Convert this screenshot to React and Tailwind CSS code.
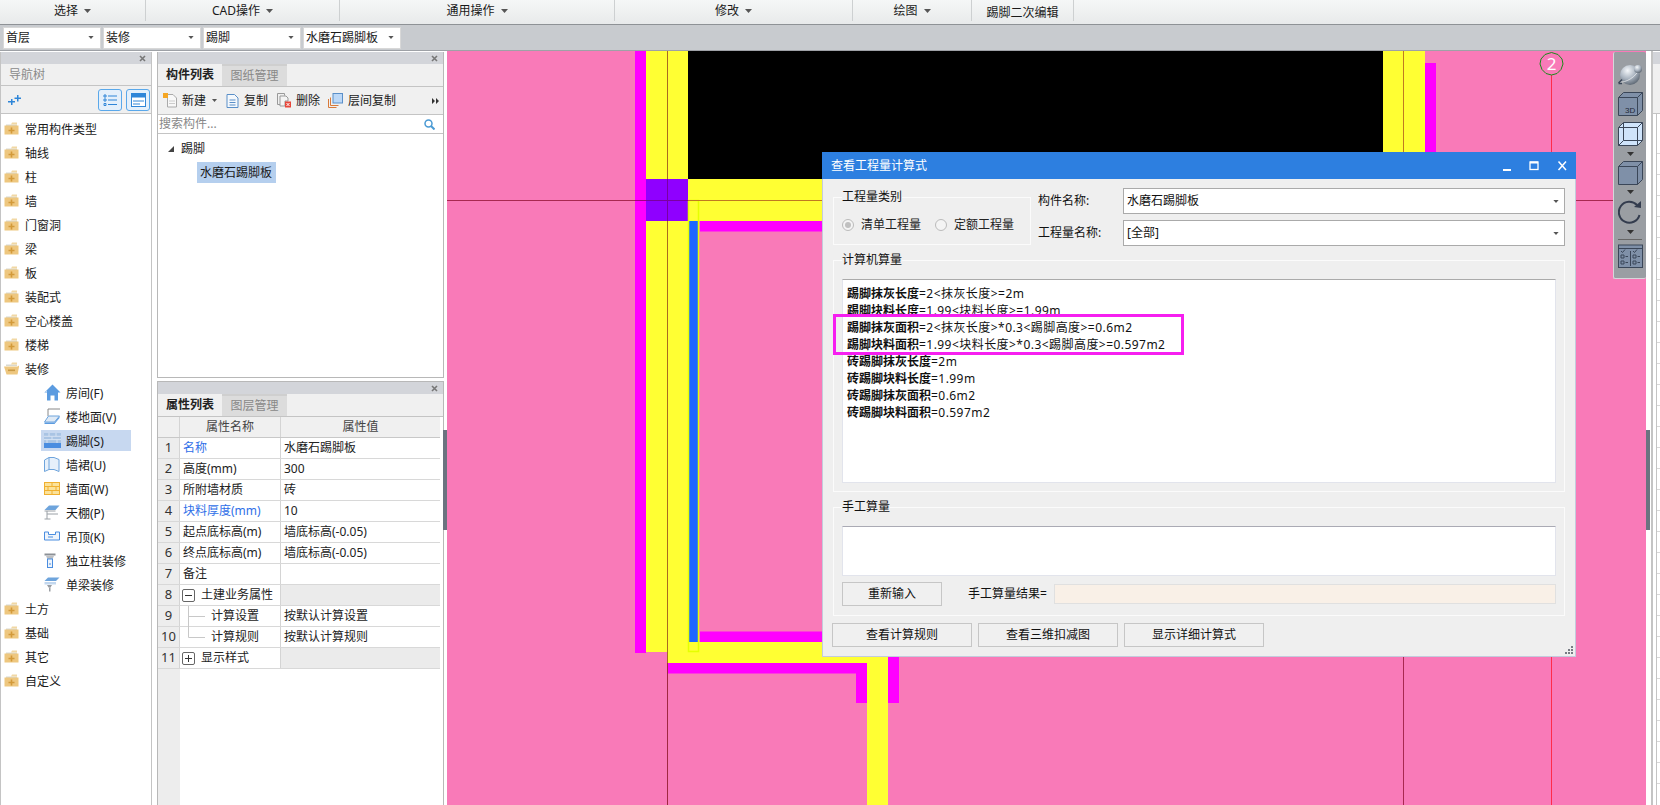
import React from "react";

const Caret = ({ c = "#555", w = 7, h = 4, cls = "" }) => (
  <svg width={w} height={h} viewBox="0 0 7 4" className={"shrink-0 " + cls}><polygon points="0,0 7,0 3.5,4" fill={c} /></svg>
);

const Close = () => (
  <svg width="7" height="7" viewBox="0 0 7 7"><path d="M1 1L6 6M6 1L1 6" stroke="#777" strokeWidth="1.6" /></svg>
);

const Folder = ({ open }) => (
  <svg width="15" height="13" viewBox="0 0 15 13" className="shrink-0">
    <path d="M2 2.5h11V4H2z" fill="#d9d9d0" />
    <path d="M8 0.5h5v2H7z" fill="#f1d8a4" />
    {open ? (
      <path d="M0 4.5h13.5l1.5-1v1.5L13.5 12.5H2.5z" fill="#eec77f" />
    ) : (
      <rect x="0.5" y="3.5" width="14" height="9" fill="#eec77f" />
    )}
    {open ? (
      <rect x="4" y="7.5" width="7" height="1.6" fill="#c99a45" />
    ) : (
      <path d="M6.7 5.5h1.6v2.2h2.2v1.6H8.300v2.200H6.700V9.300H4.500V7.700h2.200z" fill="#d39a3a" />
    )}
  </svg>
);

const icons = {
  room: (
    <svg width="17" height="17" viewBox="0 0 17 17"><path d="M8.500 0.500L0.500 8.500h2.500v8h3.500v-5h4v5H14v-8h2.500z" fill="#5b9be0" /><path d="M8.500 0.500L0.500 8.500h2.500V6z" fill="#b9d6f3" /></svg>
  ),
  floor: (
    <svg width="17" height="17" viewBox="0 0 17 17"><path d="M4 1h12M4 1L4 8" stroke="#888" fill="none" /><path d="M4.500 8L0.500 14h10l5-6z" fill="#dfeaf6" stroke="#6ea4dc" /><path d="M0.500 14.500h10l5-6v1.500l-5 6H0.500z" fill="#5b9be0" /></svg>
  ),
  skirt: (
    <svg width="17" height="15" viewBox="0 0 17 15"><rect width="17" height="10" fill="#a9c4e4" /><path d="M0 3.300h17M0 6.600h17M5 0v3.300M12 0v3.300M8 3.300v3.300M3 6.600v3.400M13 6.600v3.400" stroke="#d6e3f3" /><rect y="10" width="17" height="5" fill="#4a8de0" /></svg>
  ),
  dado: (
    <svg width="16" height="15" viewBox="0 0 16 15"><path d="M0.500 3L5 0.500v12L0.500 14.500zM5 0.500h5l5 2v12l-5-2H5" fill="#e7f0fa" stroke="#6ea4dc" /></svg>
  ),
  wall: (
    <svg width="16" height="13" viewBox="0 0 16 13"><rect x="0.500" y="0.500" width="15" height="12" fill="#fbe29a" stroke="#f0b030" /><path d="M0 4.500h16M0 8.500h16M8 0.500v4M4 4.500v4M12 4.500v4M8 8.500v4" stroke="#f0b030" /></svg>
  ),
  ceil: (
    <svg width="16" height="15" viewBox="0 0 16 15"><path d="M0.500 5L5 0.500h10.500l-4 4.500z" fill="#6ea4dc" /><path d="M0.500 6h11M3 6v8M0.500 14h6M3 9h11" stroke="#9aa0a6" fill="none" /></svg>
  ),
  hang: (
    <svg width="16" height="10" viewBox="0 0 16 10"><path d="M0.500 1h4v2.500h7V1h4v8H0.500z" fill="#eef4fb" stroke="#4a8de0" /><path d="M4 6h5" stroke="#4a8de0" /></svg>
  ),
  col: (
    <svg width="12" height="15" viewBox="0 0 12 15"><path d="M0.500 0.500h11v2h-11z" fill="#8c9096" /><path d="M2 3h8L8.500 6h-5z" fill="#bcbfc3" /><rect x="3.500" y="6" width="5" height="8.500" fill="#eef4fb" stroke="#4a8de0" /><path d="M5 11h2" stroke="#4a8de0" /></svg>
  ),
  beam: (
    <svg width="16" height="15" viewBox="0 0 16 15"><path d="M0.500 4L4 0.500h11.500L12 4z" fill="#6ea4dc" /><path d="M0.500 5h11.500v2.500H0.500z" fill="#c2d7ee" /><path d="M3 8h5L6.500 10.500H4.500z" fill="#9a9ea3" /><rect x="5" y="10.500" width="1.500" height="4" fill="#9a9ea3" /></svg>
  ),
};

const topTree = ["常用构件类型", "轴线", "柱", "墙", "门窗洞", "梁", "板", "装配式", "空心楼盖", "楼梯"];
const subTree = [
  ["房间(F)", "room"],
  ["楼地面(V)", "floor"],
  ["踢脚(S)", "skirt"],
  ["墙裙(U)", "dado"],
  ["墙面(W)", "wall"],
  ["天棚(P)", "ceil"],
  ["吊顶(K)", "hang"],
  ["独立柱装修", "col"],
  ["单梁装修", "beam"],
];
const endTree = ["土方", "基础", "其它", "自定义"];

const menus = [
  ["选择", 146],
  ["CAD操作", 194],
  ["通用操作", 275],
  ["修改", 238],
  ["绘图", 119],
];

const rows = [
  ["名称", "水磨石踢脚板", "blue"],
  ["高度(mm)", "300"],
  ["所附墙材质", "砖"],
  ["块料厚度(mm)", "10", "blue"],
  ["起点底标高(m)", "墙底标高(-0.05)"],
  ["终点底标高(m)", "墙底标高(-0.05)"],
  ["备注", ""],
  ["土建业务属性", "", "minus"],
  ["计算设置", "按默认计算设置", "child"],
  ["计算规则", "按默认计算规则", "child2"],
  ["显示样式", "", "plus"],
];

const calcLines = [
  ["踢脚抹灰长度", "=2<抹灰长度>=2m"],
  ["踢脚块料长度", "=1.99<块料长度>=1.99m"],
  ["踢脚抹灰面积", "=2<抹灰长度>*0.3<踢脚高度>=0.6m2"],
  ["踢脚块料面积", "=1.99<块料长度>*0.3<踢脚高度>=0.597m2"],
  ["砖踢脚抹灰长度", "=2m"],
  ["砖踢脚块料长度", "=1.99m"],
  ["砖踢脚抹灰面积", "=0.6m2"],
  ["砖踢脚块料面积", "=0.597m2"],
];

const PanelHeader = () => (
  <div className="h-[12px] bg-[#d3d5da] flex items-center justify-end pr-[5px] shrink-0"><Close /></div>
);

const Tabs = ({ a, b }) => (
  <div className="h-[23px] flex bg-[#f0f0f0] border-b border-[#c4c4c4] shrink-0">
    <div className="w-[64px] flex items-center justify-center font-bold text-[#222]">{a}</div>
    <div className="w-[65px] flex items-center justify-center bg-[#dcdcdc] text-[#888] border-t-2 border-[#cfcfcf]">{b}</div>
  </div>
);

const Canvas = () => (
  <svg viewBox="447 51 1199 754" className="block w-full h-full">
    <rect x="447" y="51" width="1199" height="754" fill="#f97ab8" />
    <rect x="635" y="51" width="11" height="602" fill="#ff00ff" />
    <rect x="646" y="51" width="21" height="601" fill="#ffff33" />
    <rect x="668" y="51" width="21" height="612" fill="#ffff33" />
    <rect x="688" y="51" width="695" height="128" fill="#000" />
    <rect x="1383" y="51" width="42" height="170" fill="#ffff33" />
    <rect x="688" y="179" width="737" height="42" fill="#ffff33" />
    <rect x="1425" y="63" width="11" height="168" fill="#ff00ff" />
    <rect x="646" y="179" width="42" height="42" fill="#8f00ff" />
    <rect x="700" y="221" width="736" height="10.500" fill="#ff00ff" />
    <rect x="700" y="631.500" width="200" height="10.500" fill="#ff00ff" />
    <rect x="668" y="642" width="220" height="21" fill="#ffff33" />
    <rect x="867" y="642" width="21" height="163" fill="#ffff33" />
    <path d="M668 663h199v40h-11v-29.500H668z" fill="#ff00ff" />
    <rect x="888" y="642" width="11" height="61" fill="#ff00ff" />
    <rect x="689" y="221" width="9" height="421" fill="#1e66ff" />
    <rect x="688.500" y="200.500" width="10" height="451" fill="none" stroke="#e6ff00" strokeWidth="1.500" />
    <path d="M447 200.500H635" stroke="#a82850" />
    <path d="M635 200.500H646" stroke="#a00080" />
    <path d="M646 200.500H688" stroke="#7a00a0" />
    <path d="M688 200.500H1425" stroke="#c07a20" />
    <path d="M1425 200.500H1646" stroke="#a82850" />
    <path d="M667.500 51V179" stroke="#a86a20" />
    <path d="M667.500 179V221" stroke="#7a00a0" />
    <path d="M667.500 221V663" stroke="#a86a20" />
    <path d="M667.500 663V805" stroke="#a02840" />
    <path d="M1403.500 51V221" stroke="#c07a20" />
    <path d="M1403.500 221V805" stroke="#a82850" />
    <path d="M1551.500 75V805" stroke="#ff2b4a" />
    <polygon points="1551.500,52.500 1558,54.500 1562,59 1563,64 1561,69.500 1557,73.500 1551.500,75 1546,73.500 1542,69.500 1540,64 1541,59 1545,54.500" fill="none" stroke="#1a8a1a" />
    <text x="1551.500" y="70" textAnchor="middle" fontSize="17" fill="#fff" fontFamily="'Noto Sans',sans-serif">2</text>
  </svg>
);

const boxFill = "#7f90a8";
const boxStroke = "#3a4658";

const NavTools = () => (
  <div className="absolute top-[1px] right-0 w-[33px] h-[227px] bg-[#9a9ea3] rounded-[2px] border-l border-b border-[#d5d7da] flex flex-col items-center">
    <svg width="25" height="23" viewBox="0 0 25 23" className="mt-[11px]">
      <defs>
        <radialGradient id="sph" cx="38%" cy="28%" r="75%"><stop offset="0" stopColor="#f4f7fa" /><stop offset="0.55" stopColor="#a9b3bf" /><stop offset="1" stopColor="#5c6672" /></radialGradient>
      </defs>
      <circle cx="12" cy="12" r="10" fill="url(#sph)" />
      <path d="M1 19C8 20 18 14 22 5" fill="none" stroke="#fff" strokeOpacity="0.6" />
      <circle cx="20" cy="6" r="4" fill="url(#sph)" />
      <path d="M0.500 20L4 16.500M0.500 20.500H4" stroke="#3a4658" strokeWidth="1.500" />
    </svg>
    <svg width="25" height="24" viewBox="0 0 25 24" className="mt-[6px]">
      <path d="M0.500 5.500L5.500 0.500H24.500V18.500L19.500 23.500H0.500z" fill={boxFill} stroke={boxStroke} />
      <path d="M0.500 5.500H19.500V23.500M19.500 5.500L24.500 0.500" fill="none" stroke={boxStroke} />
      <text x="7" y="21" fontSize="8" fill="#1f2937" fontFamily="'Liberation Sans',sans-serif">3D</text>
    </svg>
    <svg width="25" height="24" viewBox="0 0 25 24" className="mt-[6px]">
      <path d="M0.500 5.500L5.500 0.500H24.500V18.500L19.500 23.500H0.500z" fill="#cfe4fb" stroke={boxStroke} />
      <path d="M0.500 5.500H19.500V23.500M19.500 5.500L24.500 0.500M5.500 0.500V18.500H24.500M5.500 18.500L0.500 23.500" fill="none" stroke={boxStroke} />
    </svg>
    <Caret c="#333" cls="mt-[6px]" />
    <svg width="25" height="24" viewBox="0 0 25 24" className="mt-[5px]">
      <path d="M0.500 5.500L5.500 0.500H24.500V18.500L19.500 23.500H0.500z" fill={boxFill} stroke={boxStroke} />
      <path d="M0.500 5.500H19.500V23.500M19.500 5.500L24.500 0.500" fill="none" stroke={boxStroke} />
    </svg>
    <Caret c="#333" cls="mt-[5px]" />
    <svg width="24" height="24" viewBox="0 0 24 24" className="mt-[6px]">
      <path d="M19 5A10.500 10.500 0 1 0 21.500 15" fill="none" stroke="#333c4e" strokeWidth="2" />
      <polygon points="16,7 23,8 23,1" fill="#333c4e" />
    </svg>
    <Caret c="#333" cls="mt-[6px]" />
    <div className="w-[24px] h-px bg-[#666] mt-[5px]" />
    <svg width="25" height="24" viewBox="0 0 25 24" className="mt-[4px]">
      <rect x="0.500" y="1" width="24" height="22.500" fill={boxFill} stroke={boxStroke} />
      <path d="M0.500 4.500H24.500M12.500 7V22" stroke={boxStroke} />
      <path d="M3 11h3v3H3zM3 17h3v3H3zM15 11h3v3h-3zM15 17h3v3h-3zM7.500 12.500H10M7.500 18.500H10M19.500 12.500H22M19.500 18.500H22M3 7l1.500 1.500L7 5.500M15 7l1.500 1.500L19 5.500" fill="none" stroke={boxStroke} />
    </svg>
  </div>
);

const Combo = ({ text, w, h }) => (
  <div className={`${w} ${h} bg-white border border-[#aaa] flex items-center pl-[3px] pr-[5px] justify-between`}>
    <span>{text}</span><Caret c="#555" w={6} h={3} />
  </div>
);

const Radio = ({ on }) => (
  <span className="w-[12px] h-[12px] rounded-full border border-[#bbb] bg-[#f4f4f4] flex items-center justify-center shrink-0">
    {on && <span className="w-[6px] h-[6px] rounded-full bg-[#c0c0c0]" />}
  </span>
);

const Btn = ({ children, cls = "" }) => (
  <div className={`h-[24px] bg-[#f0f0f0] border border-[#c6c6c6] flex items-center justify-center shrink-0 ${cls}`}>{children}</div>
);

const Dialog = () => (
  <div className="absolute left-[375px] top-[101px] w-[754px] h-[505px] bg-[#efefef] border-x border-b border-[#c3cbdc] flex flex-col text-[12px] text-[#111]">
    <div className="h-[27px] -mx-px bg-[#2d7fe0] flex items-center pl-[9px] text-white shrink-0">
      <span className="flex-1">查看工程量计算式</span>
      <svg width="72" height="12" viewBox="0 0 72 12" className="mr-[3px]">
        <rect x="2" y="9" width="8" height="2" fill="#fff" />
        <rect x="29" y="2" width="8" height="7.500" fill="none" stroke="#fff" strokeWidth="1.300" />
        <rect x="29" y="1.500" width="8" height="2" fill="#fff" />
        <path d="M57.500 1.500L65 10M65 1.500L57.500 10" stroke="#fff" strokeWidth="1.500" />
      </svg>
    </div>
    <div className="px-[10px] pt-[9px] flex flex-col flex-1 relative">
      <div className="flex h-[58px]">
        <fieldset className="w-[199px] h-[56px] mt-px border border-[#fbfbfb]">
          <legend className="ml-[8px] leading-[16px]">工程量类别</legend>
          <div className="flex items-center h-[16px] mt-[12px] ml-[8px]">
            <Radio on />
            <span className="ml-[7px] text-[#222]">清单工程量</span>
            <span className="ml-[14px]"><Radio /></span>
            <span className="ml-[7px] text-[#222]">定额工程量</span>
          </div>
        </fieldset>
        <div className="ml-[6px] flex-1 flex flex-col gap-[6px]">
          <div className="flex items-center">
            <span className="w-[86px] pl-[1px]">构件名称:</span>
            <Combo text="水磨石踢脚板" w="w-[442px]" h="h-[26px]" />
          </div>
          <div className="flex items-center">
            <span className="w-[86px] pl-[1px]">工程量名称:</span>
            <Combo text="[全部]" w="w-[442px]" h="h-[26px]" />
          </div>
        </div>
      </div>
      <fieldset className="mt-[6px] w-[732px] h-[240px] border border-[#fbfbfb]">
        <legend className="ml-[8px] leading-[16px]">计算机算量</legend>
        <div className="mt-[11px] ml-[8px] w-[714px] h-[204px] bg-white border border-[#e2e4ec] border-t-[#aaaaaa] pt-[5px] pl-[4px]">
          {calcLines.map(([a, b]) => (
            <div key={a} className="h-[17px] leading-[17px] whitespace-nowrap"><b className="font-bold">{a}</b><span className="tracking-[0.45px]">{b}</span></div>
          ))}
        </div>
      </fieldset>
      <fieldset className="mt-[7px] w-[732px] h-[117px] border border-[#fbfbfb]">
        <legend className="ml-[8px] leading-[16px]">手工算量</legend>
        <div className="mt-[11px] ml-[8px] w-[714px] h-[50px] bg-white border border-[#e2e4ec] border-t-[#aaaab4]" />
        <div className="mt-[6px] ml-[8px] w-[714px] flex items-center">
          <Btn cls="w-[100px]">重新输入</Btn>
          <span className="ml-[26px] w-[86px] whitespace-nowrap">手工算量结果=</span>
          <div className="flex-1 h-[20px] bg-[#f9f0e7] border border-[#e0e0e0]" />
        </div>
      </fieldset>
      <div className="mt-[7px] -ml-px flex gap-[6px]">
        <Btn cls="w-[140px]">查看计算规则</Btn>
        <Btn cls="w-[140px]">查看三维扣减图</Btn>
        <Btn cls="w-[140px]">显示详细计算式</Btn>
      </div>
      <div className="absolute left-[10px] top-[135px] w-[351px] h-[41px] border-[3px] border-[#f61ff0]" />
      <svg width="8" height="8" viewBox="0 0 8 8" className="absolute right-[2px] bottom-[2px]">
        <path d="M6 0h2v2H6zM3 3h2v2H3zM6 3h2v2H6zM0 6h2v2H0zM3 6h2v2H3zM6 6h2v2H6z" fill="#777c84" />
      </svg>
    </div>
  </div>
);

const NavTree = () => (
  <div className="w-[152px] shrink-0 border-x border-[#c4c4c4] flex flex-col mt-px">
    <PanelHeader />
    <div className="h-[22px] bg-[#f0f0f0] border-b border-[#c4c4c4] flex items-center pl-[8px] text-[#8a8a8a] shrink-0">导航树</div>
    <div className="h-[28px] bg-[#f0f0f0] border-b border-[#c4c4c4] flex items-center shrink-0">
      <svg width="13" height="10" viewBox="0 0 13 10" className="ml-[7px]"><path d="M3 4h1.500v2H7v1.500H4.500V10H3V7.500H0V6h3zM9 0h1.500v2.500H13V4h-2.500v2.500H9V4H6.500V2.500H9z" fill="#2f86d8" /></svg>
      <div className="ml-[77px] w-[24px] h-[22px] rounded-[3px] border border-[#5aa8ea] bg-[#e4f0fb] flex items-center justify-center">
        <svg width="14" height="14" viewBox="0 0 14 14"><path d="M1 2h2v2H1zM1 6h2v2H1zM1 10.500h2v2H1zM5 3h9M5 7h9M5 11.500h9" fill="none" stroke="#2f86d8" /></svg>
      </div>
      <div className="ml-[4px] w-[24px] h-[22px] rounded-[3px] border border-[#5aa8ea] bg-[#e4f0fb] flex items-center justify-center">
        <svg width="15" height="14" viewBox="0 0 15 14"><rect x="0.500" y="0.500" width="14" height="13" fill="#fff" stroke="#2f86d8" /><rect x="0.500" y="0.500" width="14" height="4" fill="#2f86d8" /><path d="M2 8h11M2 11h7" stroke="#2f86d8" /></svg>
      </div>
    </div>
    <div className="pt-[2px] flex-1 bg-white">
      {topTree.map((t) => (
        <div key={t} className="h-[24px] flex items-center pl-[3px] gap-[5px]"><Folder /><span className="ml-px mt-[3px]">{t}</span></div>
      ))}
      <div className="h-[24px] flex items-center pl-[3px] gap-[5px]"><Folder open /><span className="ml-px mt-[3px]">装修</span></div>
      {subTree.map(([t, ic]) => (
        <div key={t} className={`h-[24px] flex items-center ml-[40px] w-[90px] ${t === "踢脚(S)" ? "bg-[linear-gradient(#c7d8f0,#c7d8f0)] bg-[length:100%_21px] bg-no-repeat bg-center" : ""}`}>
          <span className="w-[25px] flex justify-start pl-[3px] shrink-0">{icons[ic]}</span><span className="mt-[3px]">{t}</span>
        </div>
      ))}
      {endTree.map((t) => (
        <div key={t} className="h-[24px] flex items-center pl-[3px] gap-[5px]"><Folder /><span className="ml-px mt-[3px]">{t}</span></div>
      ))}
    </div>
  </div>
);

const ComponentPanel = () => (
  <div className="h-[326px] border-x border-b border-[#b8b8b8] flex flex-col mt-px shrink-0">
    <PanelHeader />
    <Tabs a="构件列表" b="图纸管理" />
    <div className="h-[28px] bg-[#f0f0f0] border-b border-[#c4c4c4] flex items-center shrink-0 relative pl-[5px]">
      <svg width="15" height="15" viewBox="0 0 15 15"><path d="M4.500 1.500H10l3.500 3.500v9h-9z" fill="#f8f8f8" stroke="#aaa" /><path d="M6 8h6M6 10.500h6" stroke="#ccc" /><rect x="0" y="0" width="5" height="5" fill="#f5a623" /></svg>
      <span className="ml-[4px]">新建</span>
      <Caret cls="ml-[6px]" w={5} h={3} />
      <svg width="13" height="14" viewBox="0 0 13 14" className="ml-[9px]"><path d="M1 0.500h7.500L12 4v9.500H1z" fill="#f4f8fc" stroke="#5a8fc8" /><path d="M3.500 6h6M3.500 8.500h6M3.500 11h6" stroke="#5a8fc8" /></svg>
      <span className="ml-[5px]">复制</span>
      <svg width="14" height="15" viewBox="0 0 14 15" className="ml-[9px]"><path d="M0.500 0.500h7v2M0.500 0.500v11h3" fill="none" stroke="#999" /><path d="M3 3h6l2 2v3H8v5H3z" fill="#f4f4f4" stroke="#999" /><rect x="8" y="8.500" width="6" height="6" fill="#e8463a" /><path d="M9.500 10l3 3M12.500 10l-3 3" stroke="#fff" /></svg>
      <span className="ml-[5px]">删除</span>
      <svg width="15" height="15" viewBox="0 0 15 15" className="ml-[8px]"><path d="M0.500 6v8.500h8" fill="none" stroke="#d87a3a" /><path d="M2.500 4.500v8h8" fill="none" stroke="#d87a3a" /><rect x="5" y="0.500" width="9.500" height="9.500" fill="#bcd8f7" stroke="#5a8fc8" /></svg>
      <span className="ml-[5px]">层间复制</span>
      <svg width="7" height="6" viewBox="0 0 7 6" className="absolute right-[4px] top-[11px]"><path d="M0 0l3 3-3 3zM4 0l3 3-3 3z" fill="#333" /></svg>
    </div>
    <div className="h-[19px] bg-white border-b border-[#c4c4c4] flex items-center justify-between pl-[1px] pr-[8px] text-[#888] shrink-0">
      <span>搜索构件...</span>
      <svg width="11" height="11" viewBox="0 0 11 11"><circle cx="4.500" cy="4.500" r="3.500" fill="none" stroke="#4a9ad4" strokeWidth="1.500" /><path d="M7 7l3.500 3.500" stroke="#4a9ad4" strokeWidth="2" /></svg>
    </div>
    <div className="flex-1 bg-white">
      <div className="h-[24px] mt-[3px] flex items-center">
        <svg width="6" height="6" viewBox="0 0 6 6" className="ml-[10px]"><polygon points="6,0 6,6 0,6" fill="#444" /></svg>
        <span className="ml-[7px]">踢脚</span>
      </div>
      <div className="ml-[39px] mt-px w-[79px] h-[21px] bg-[#b5cfee] flex items-center pl-[3px]">水磨石踢脚板</div>
    </div>
  </div>
);

const RowName = ({ name, kind }) => {
  const cls = kind === "blue" ? "text-[#2f6fe8]" : "";
  if (kind === "minus" || kind === "plus") {
    return (
      <div className="flex items-center pl-[2px]">
        <span className="w-[13px] h-[13px] border border-[#666] rounded-[2px] flex items-center justify-center bg-white">
          <svg width="7" height="7" viewBox="0 0 7 7"><path d={kind === "plus" ? "M0 3.500h7M3.500 0v7" : "M0 3.500h7"} stroke="#333" /></svg>
        </span>
        <span className="ml-[6px]">{name}</span>
      </div>
    );
  }
  if (kind === "child" || kind === "child2") {
    return (
      <div className="flex items-center h-full relative">
        <svg width="30" height="21" viewBox="0 0 30 21" className="shrink-0">
          <path d={kind === "child" ? "M8.500 0V21M8.500 10.500H25" : "M8.500 0V10.500H25"} stroke="#c8c8c8" fill="none" />
        </svg>
        <span className="ml-px">{name}</span>
      </div>
    );
  }
  return <span className={"pl-[3px] " + cls}>{name}</span>;
};

const PropPanel = () => (
  <div className="flex-1 mt-[3px] border-x border-t border-[#b8b8b8] flex flex-col min-h-0">
    <PanelHeader />
    <Tabs a="属性列表" b="图层管理" />
    <div className="flex-1 flex flex-col bg-white text-[#222]">
      <div className="flex h-[21px] bg-[#f0f0f0] border-b border-[#c8c8c8] w-[282px] shrink-0 text-[#444]">
        <div className="w-[22px] border-r border-[#d4d4d4]" />
        <div className="w-[101px] border-r border-[#d4d4d4] flex items-center justify-center">属性名称</div>
        <div className="flex-1 flex items-center justify-center">属性值</div>
      </div>
      {rows.map(([n, v, k], i) => {
        const group = k === "minus" || k === "plus";
        return (
          <div key={n} className={`flex h-[21px] border-b border-[#d8d8d8] w-[282px] shrink-0 ${group ? "bg-[#ebebeb]" : ""}`}>
            <div className="w-[22px] bg-[#ededed] border-r border-[#d4d4d4] flex items-center justify-center text-[13px] text-[#333]">{i + 1}</div>
            <div className={`w-[101px] border-r border-[#d4d4d4] flex items-center whitespace-nowrap ${group ? "bg-white" : ""}`}><RowName name={n} kind={k} /></div>
            <div className="flex-1 flex items-center pl-[3px] whitespace-nowrap">{v}</div>
          </div>
        );
      })}
      <div className="flex-1 w-[22px] bg-[#ededed]" />
    </div>
  </div>
);

const RightStrip = () => (
  <div className="w-[14px] shrink-0 flex bg-white">
    <div className="w-[4px] flex items-center">
      <div className="w-[4px] h-[100px] bg-[#6b7380] mt-[104px]" />
    </div>
    <div className="flex-1 flex flex-col border-l-2 border-[#c4c4c4] ml-px">
      <div className="h-[12px] mt-px bg-[#d3d5da]" />
      <div className="h-[52px] bg-[#f0f0f0] border-b border-[#c4c4c4]" />
      <div className="flex-1 pl-[3px] flex">
        <div className="w-px bg-[#c4c4c4]" />
        <div className="flex-1 flex flex-col pt-[19px]">
          {Array.from({ length: 32 }).map((_, i) => (
            <div key={i} className={`h-[21px] border-b shrink-0 ${i > 30 ? "border-transparent" : "border-[#d8d8d8]"}`} />
          ))}
        </div>
      </div>
    </div>
  </div>
);

export default function App() {
  return (
    <div className="w-[1660px] h-[805px] overflow-hidden flex flex-col bg-white text-[12px] text-[#1a1a1a] font-['Noto_Sans','Noto_Sans_CJK_SC',sans-serif]">
      <div className="h-[25px] shrink-0 flex bg-[linear-gradient(#f5f7f7,#e8eaeb)] border-b border-[#8e9296]">
        {menus.map(([m, w]) => (
          <div key={m} style={{ width: w }} className="h-[21px] border-r border-[#cdd0d1] flex items-center justify-center gap-[6px]">
            <span>{m}</span><Caret />
          </div>
        ))}
        <div className="w-[102px] h-[21px] border-r border-[#cdd0d1] flex items-center justify-center pt-[4px]">踢脚二次编辑</div>
      </div>
      <div className="h-[26px] shrink-0 bg-[#c8cbcf] border-b border-[#9ea1a6] flex items-center pl-[3px] gap-[2px]">
        {["首层", "装修", "踢脚", "水磨石踢脚板"].map((t) => (
          <div key={t} className="w-[98px] h-[22px] bg-white border border-[#d8d8d8] flex items-center justify-between pl-[2px] pr-[6px]">
            <span>{t}</span><Caret c="#555" w={6} h={3} />
          </div>
        ))}
      </div>
      <div className="flex-1 flex min-h-0">
        <NavTree />
        <div className="w-[287px] ml-[5px] shrink-0 flex flex-col"><ComponentPanel /><PropPanel /></div>
        <div className="w-[3px] shrink-0 flex items-center">
          <div className="w-[4px] -ml-px h-[100px] bg-[#6b7380] mt-[104px] shrink-0" />
        </div>
        <div className="w-[1199px] shrink-0 relative">
          <Canvas />
          <NavTools />
          <Dialog />
        </div>
        <RightStrip />
      </div>
    </div>
  );
}
